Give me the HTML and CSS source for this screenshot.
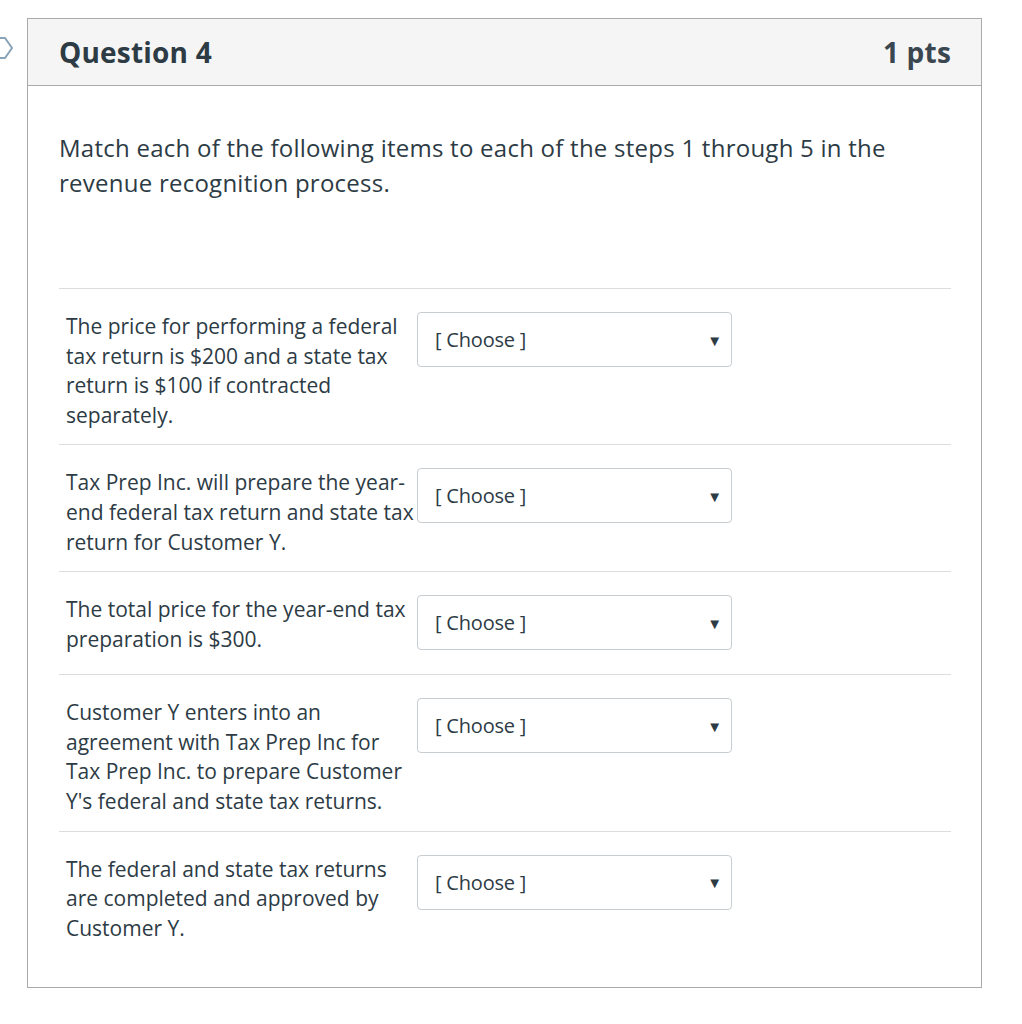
FILE: index.html
```html
<!DOCTYPE html>
<html lang="en">
  <head>
    <meta charset="utf-8">
    <title>Question 4</title>
    <link rel="stylesheet" href="styles.css">
  </head>
  <body>
    <div class="page">
      <svg class="flag" width="14" height="24" viewBox="0 0 14 24">
        <path d="M-4 2 H5 L12 12 L5 22 H-4" fill="none" stroke="#8aa3b6" stroke-width="2" />
      </svg>

      <div class="question">
        <div class="header">
          <h2 class="title">Question 4</h2>
          <span class="points">1 pts</span>
        </div>

        <div class="content">
          <p class="text">Match each of the following items to each of the steps 1 through 5 in the revenue recognition process.</p>

          <div class="answers">
            <div class="answer">
              <div class="label">The price for performing a federal tax return is $200 and a state tax return is $100 if contracted separately.</div>
              <div class="select"><span>[ Choose ]</span><span class="caret">&#9660;</span></div>
            </div>
            <div class="answer">
              <div class="label">Tax Prep Inc. will prepare the year-end federal tax return and state tax return for Customer Y.</div>
              <div class="select"><span>[ Choose ]</span><span class="caret">&#9660;</span></div>
            </div>
            <div class="answer">
              <div class="label">The total price for the year-end tax preparation is $300.</div>
              <div class="select"><span>[ Choose ]</span><span class="caret">&#9660;</span></div>
            </div>
            <div class="answer">
              <div class="label">Customer Y enters into an agreement with Tax Prep Inc for Tax Prep Inc. to prepare Customer Y's federal and state tax returns.</div>
              <div class="select"><span>[ Choose ]</span><span class="caret">&#9660;</span></div>
            </div>
            <div class="answer last">
              <div class="label">The federal and state tax returns are completed and approved by Customer Y.</div>
              <div class="select"><span>[ Choose ]</span><span class="caret">&#9660;</span></div>
            </div>
          </div>
        </div>
      </div>
    </div>
  </body>
</html>
```

FILE: styles.css
```css
body {
  margin: 0;
  background: #fff;
  color: #2d3b45;
  font-family: "Open Sans", "Noto Sans", sans-serif;
}

.page {
  position: relative;
  padding: 18px 0 0 27px;
}

/* the little flag tab peeking in at the left edge */
.flag {
  position: absolute;
  left: 0;
  top: 36px;
}

.question {
  width: 953px;
  border: 1px solid #aaaaaa;
}

.header {
  display: flex;
  justify-content: space-between;
  align-items: center;
  height: 66px;
  padding: 0 30px 0 31px;
  background-color: #f5f5f5;
  border-bottom: 1px solid #aaaaaa;
}
.title {
  margin: 0;
  font-size: 28px;
  font-weight: 700;
  letter-spacing: 0.2px;
}
.points {
  font-size: 28px;
  font-weight: 700;
  letter-spacing: 0.2px;
  color: #3a4650;
}

.content {
  padding: 44px 30px 44px 31px;
}
.text {
  margin: 0 0 88px;
  font-size: 24px;
  line-height: 35px;
  letter-spacing: 0.25px;
}

.answers {
  border-top: 1px solid #dddddd;
}
.answer {
  display: flex;
  align-items: flex-start;
  padding: 23px 0 14px 7px;
  border-bottom: 1px solid #dddddd;
}
.answer.last {
  border-bottom: none;
  padding-bottom: 0;
}
.label {
  flex: none;
  width: 351px;
  font-size: 21px;
  line-height: 29.6px;
}
.select {
  display: flex;
  justify-content: space-between;
  align-items: center;
  box-sizing: border-box;
  width: 315px;
  height: 55px;
  margin-bottom: 10px;
  padding: 0 9px 0 17px;
  border: 1px solid #c7cdd1;
  border-radius: 4px;
  background: #fff;
  font-size: 20px;
  letter-spacing: -0.2px;
}
.caret {
  font-size: 15px;
}
```
